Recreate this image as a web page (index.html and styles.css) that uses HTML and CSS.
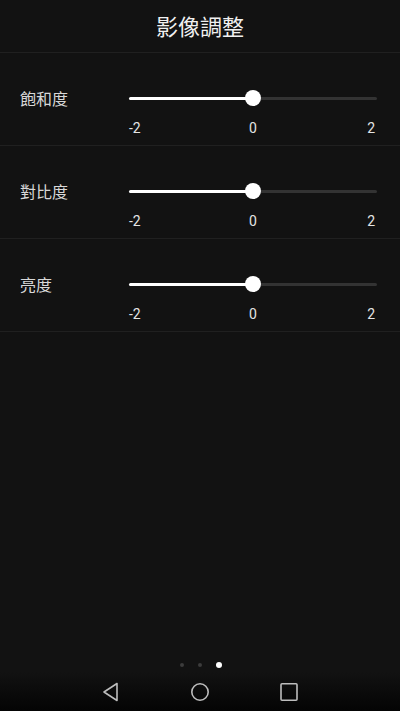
FILE: index.html
```html
<!DOCTYPE html>
<html lang="zh-Hant">
<head>
    <meta charset="UTF-8">
    <title>影像調整</title>
    <link rel="stylesheet" href="styles.css">
</head>
<body>
<div class="page">
    <div class="header">影像調整</div>
    <div class="list">
        <div class="row">
            <div class="label">飽和度</div>
            <div class="slider">
                <div class="track"><div class="fill"></div><div class="thumb"></div></div>
            </div>
            <div class="ticks"><span>-2</span><span>0</span><span>2</span></div>
        </div>
        <div class="row">
            <div class="label">對比度</div>
            <div class="slider">
                <div class="track"><div class="fill"></div><div class="thumb"></div></div>
            </div>
            <div class="ticks"><span>-2</span><span>0</span><span>2</span></div>
        </div>
        <div class="row">
            <div class="label">亮度</div>
            <div class="slider">
                <div class="track"><div class="fill"></div><div class="thumb"></div></div>
            </div>
            <div class="ticks"><span>-2</span><span>0</span><span>2</span></div>
        </div>
    </div>
    <div class="dots">
        <span class="dot"></span><span class="dot"></span><span class="dot active"></span>
    </div>
    <div class="navbar">
        <!--返回-->
        <svg width="20" height="20" viewBox="0 0 20 20"><path d="M3 10 L16 1.5 L16 18.5 Z" fill="none" stroke="#bdbdbd" stroke-width="1.6" stroke-linejoin="round"/></svg>
        <!--主頁-->
        <svg width="20" height="20" viewBox="0 0 20 20"><circle cx="10" cy="10" r="8.2" fill="none" stroke="#bdbdbd" stroke-width="1.6"/></svg>
        <!--最近-->
        <svg width="20" height="20" viewBox="0 0 20 20"><rect x="2" y="1.8" width="16" height="16.4" rx="1" fill="none" stroke="#bdbdbd" stroke-width="1.6"/></svg>
    </div>
</div>
</body>
</html>
```

FILE: styles.css
```css
* {
    margin: 0;
    padding: 0;
    box-sizing: border-box;
}

body {
    background: #121212;
    color: #e6e6e6;
    font-family: Roboto, "Noto Sans CJK TC", sans-serif;
}

.page {
    height: 100vh;
    display: flex;
    flex-direction: column;
}

.header {
    height: 53px;
    border-bottom: 1px solid #202020;
    text-align: center;
    font-size: 22px;
    line-height: 51px;
    color: #f0f0f0;
    font-family: "Noto Sans CJK TC", sans-serif;
}

.list {
    flex: 1;
}

.row {
    height: 93px;
    border-bottom: 1px solid #202020;
    display: grid;
    grid-template-columns: 109px 248px;
    grid-template-rows: 16px 16px;
    row-gap: 14px;
    padding: 37px 0 0 20px;
}

.label {
    font-family: "Noto Sans CJK TC", sans-serif;
    font-size: 16px;
    line-height: 16px;
    color: #d8d8d8;
    align-self: center;
}

.slider {
    position: relative;
    display: flex;
    align-items: center;
}

.track {
    position: relative;
    width: 100%;
    height: 3px;
    border-radius: 2px;
    background: #333;
}

.fill {
    width: 50%;
    height: 100%;
    border-radius: 2px;
    background: #fff;
}

.thumb {
    position: absolute;
    left: 50%;
    top: 50%;
    width: 16px;
    height: 16px;
    margin: -8px 0 0 -8px;
    border-radius: 50%;
    background: #fff;
}

.ticks {
    grid-column: 2;
    display: grid;
    grid-template-columns: 1fr auto 1fr;
    font-size: 14px;
    line-height: 16px;
    color: #e4e4e4;
}

.ticks span:first-child {
    justify-self: start;
}

.ticks span:last-child {
    justify-self: end;
    margin-right: 2px;
}

.dots {
    height: 18px;
    display: flex;
    justify-content: center;
    align-items: center;
    gap: 14px;
    padding: 3px 0 0 1px;
}

.dot {
    width: 4px;
    height: 4px;
    border-radius: 50%;
    background: #3c3c3c;
}

.dot.active {
    width: 6px;
    height: 6px;
    background: #fff;
}

.navbar {
    height: 39px;
    display: flex;
    justify-content: center;
    align-items: center;
    gap: 69px;
    background: linear-gradient(#121212, #040404);
}
```
